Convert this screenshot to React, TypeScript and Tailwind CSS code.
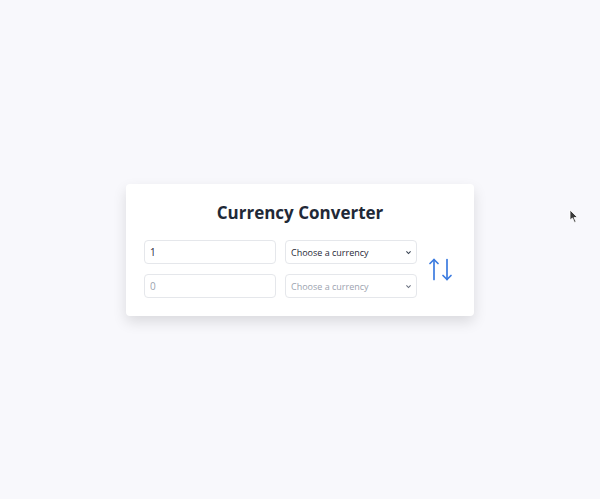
export default function App() {
  return (
    <div className="relative min-h-[499px] w-full bg-[#f8f8fc] flex items-center justify-center font-['Open_Sans',sans-serif]">
      <div className="w-[348px] bg-white rounded shadow-[0_6px_14px_rgba(0,0,0,0.12)] px-[18px] pt-[17px] pb-[18px]">
        <h1 className="text-center text-[17px] font-bold text-[#1f2937] leading-[24px]">Currency Converter</h1>
        <div className="mt-[15px] flex items-center">
          <div className="flex flex-col gap-[10px]">
            {/* from row */}
            <div className="flex gap-[9px]">
              <input
                defaultValue="1"
                className="w-[132px] h-[24px] border border-[#e5e7eb] rounded-[4px] px-[5px] pt-[1px] text-[10px] text-[#1f2937] outline-none"
              />
              <div className="relative w-[132px] h-[24px] border border-[#e5e7eb] rounded-[4px] flex items-center px-[5px] pt-[3px] text-[9px] text-[#1f2937]">
                Choose a currency
                <svg className="absolute right-[4px] top-[8px]" width="7" height="7" viewBox="0 0 10 10">
                  <path d="M2 3.5 L5 6.5 L8 3.5" stroke="#374151" strokeWidth="1.6" fill="none" />
                </svg>
              </div>
            </div>
            {/* to row */}
            <div className="flex gap-[9px]">
              <input
                placeholder="0"
                className="w-[132px] h-[24px] border border-[#e5e7eb] rounded-[4px] px-[5px] pt-[1px] text-[10px] text-[#1f2937] placeholder:text-[#9ca3af] outline-none"
              />
              <div className="relative w-[132px] h-[24px] border border-[#e5e7eb] rounded-[4px] flex items-center px-[5px] pt-[3px] text-[9px] text-[#9ca3af]">
                Choose a currency
                <svg className="absolute right-[4px] top-[8px]" width="7" height="7" viewBox="0 0 10 10">
                  <path d="M2 3.5 L5 6.5 L8 3.5" stroke="#6b7280" strokeWidth="1.6" fill="none" />
                </svg>
              </div>
            </div>
          </div>
          {/* swap */}
          <button className="ml-[12px] mt-[2px] text-[#3b7be0]">
            <svg width="24" height="23" viewBox="0 0 24 23" fill="none" stroke="currentColor" strokeWidth="1.7" strokeLinecap="round" strokeLinejoin="round">
              <path d="M5 1.5 V21.5" />
              <path d="M1 5.5 L5 1.5 L9 5.5" />
              <path d="M18 1.5 V21.5" />
              <path d="M14 17.5 L18 21.5 L22 17.5" />
            </svg>
          </button>
        </div>
      </div>
      {/* mouse pointer */}
      <svg className="absolute left-[569px] top-[209px]" width="10" height="15" viewBox="0 0 10 15">
        <path d="M1 1 L1 11 L3.5 9 L5.5 13.5 L7 12.8 L5 8.5 L8.5 8.5 Z" fill="#3a3a3a" stroke="#fff" strokeWidth="0.8" />
      </svg>
    </div>
  );
}
